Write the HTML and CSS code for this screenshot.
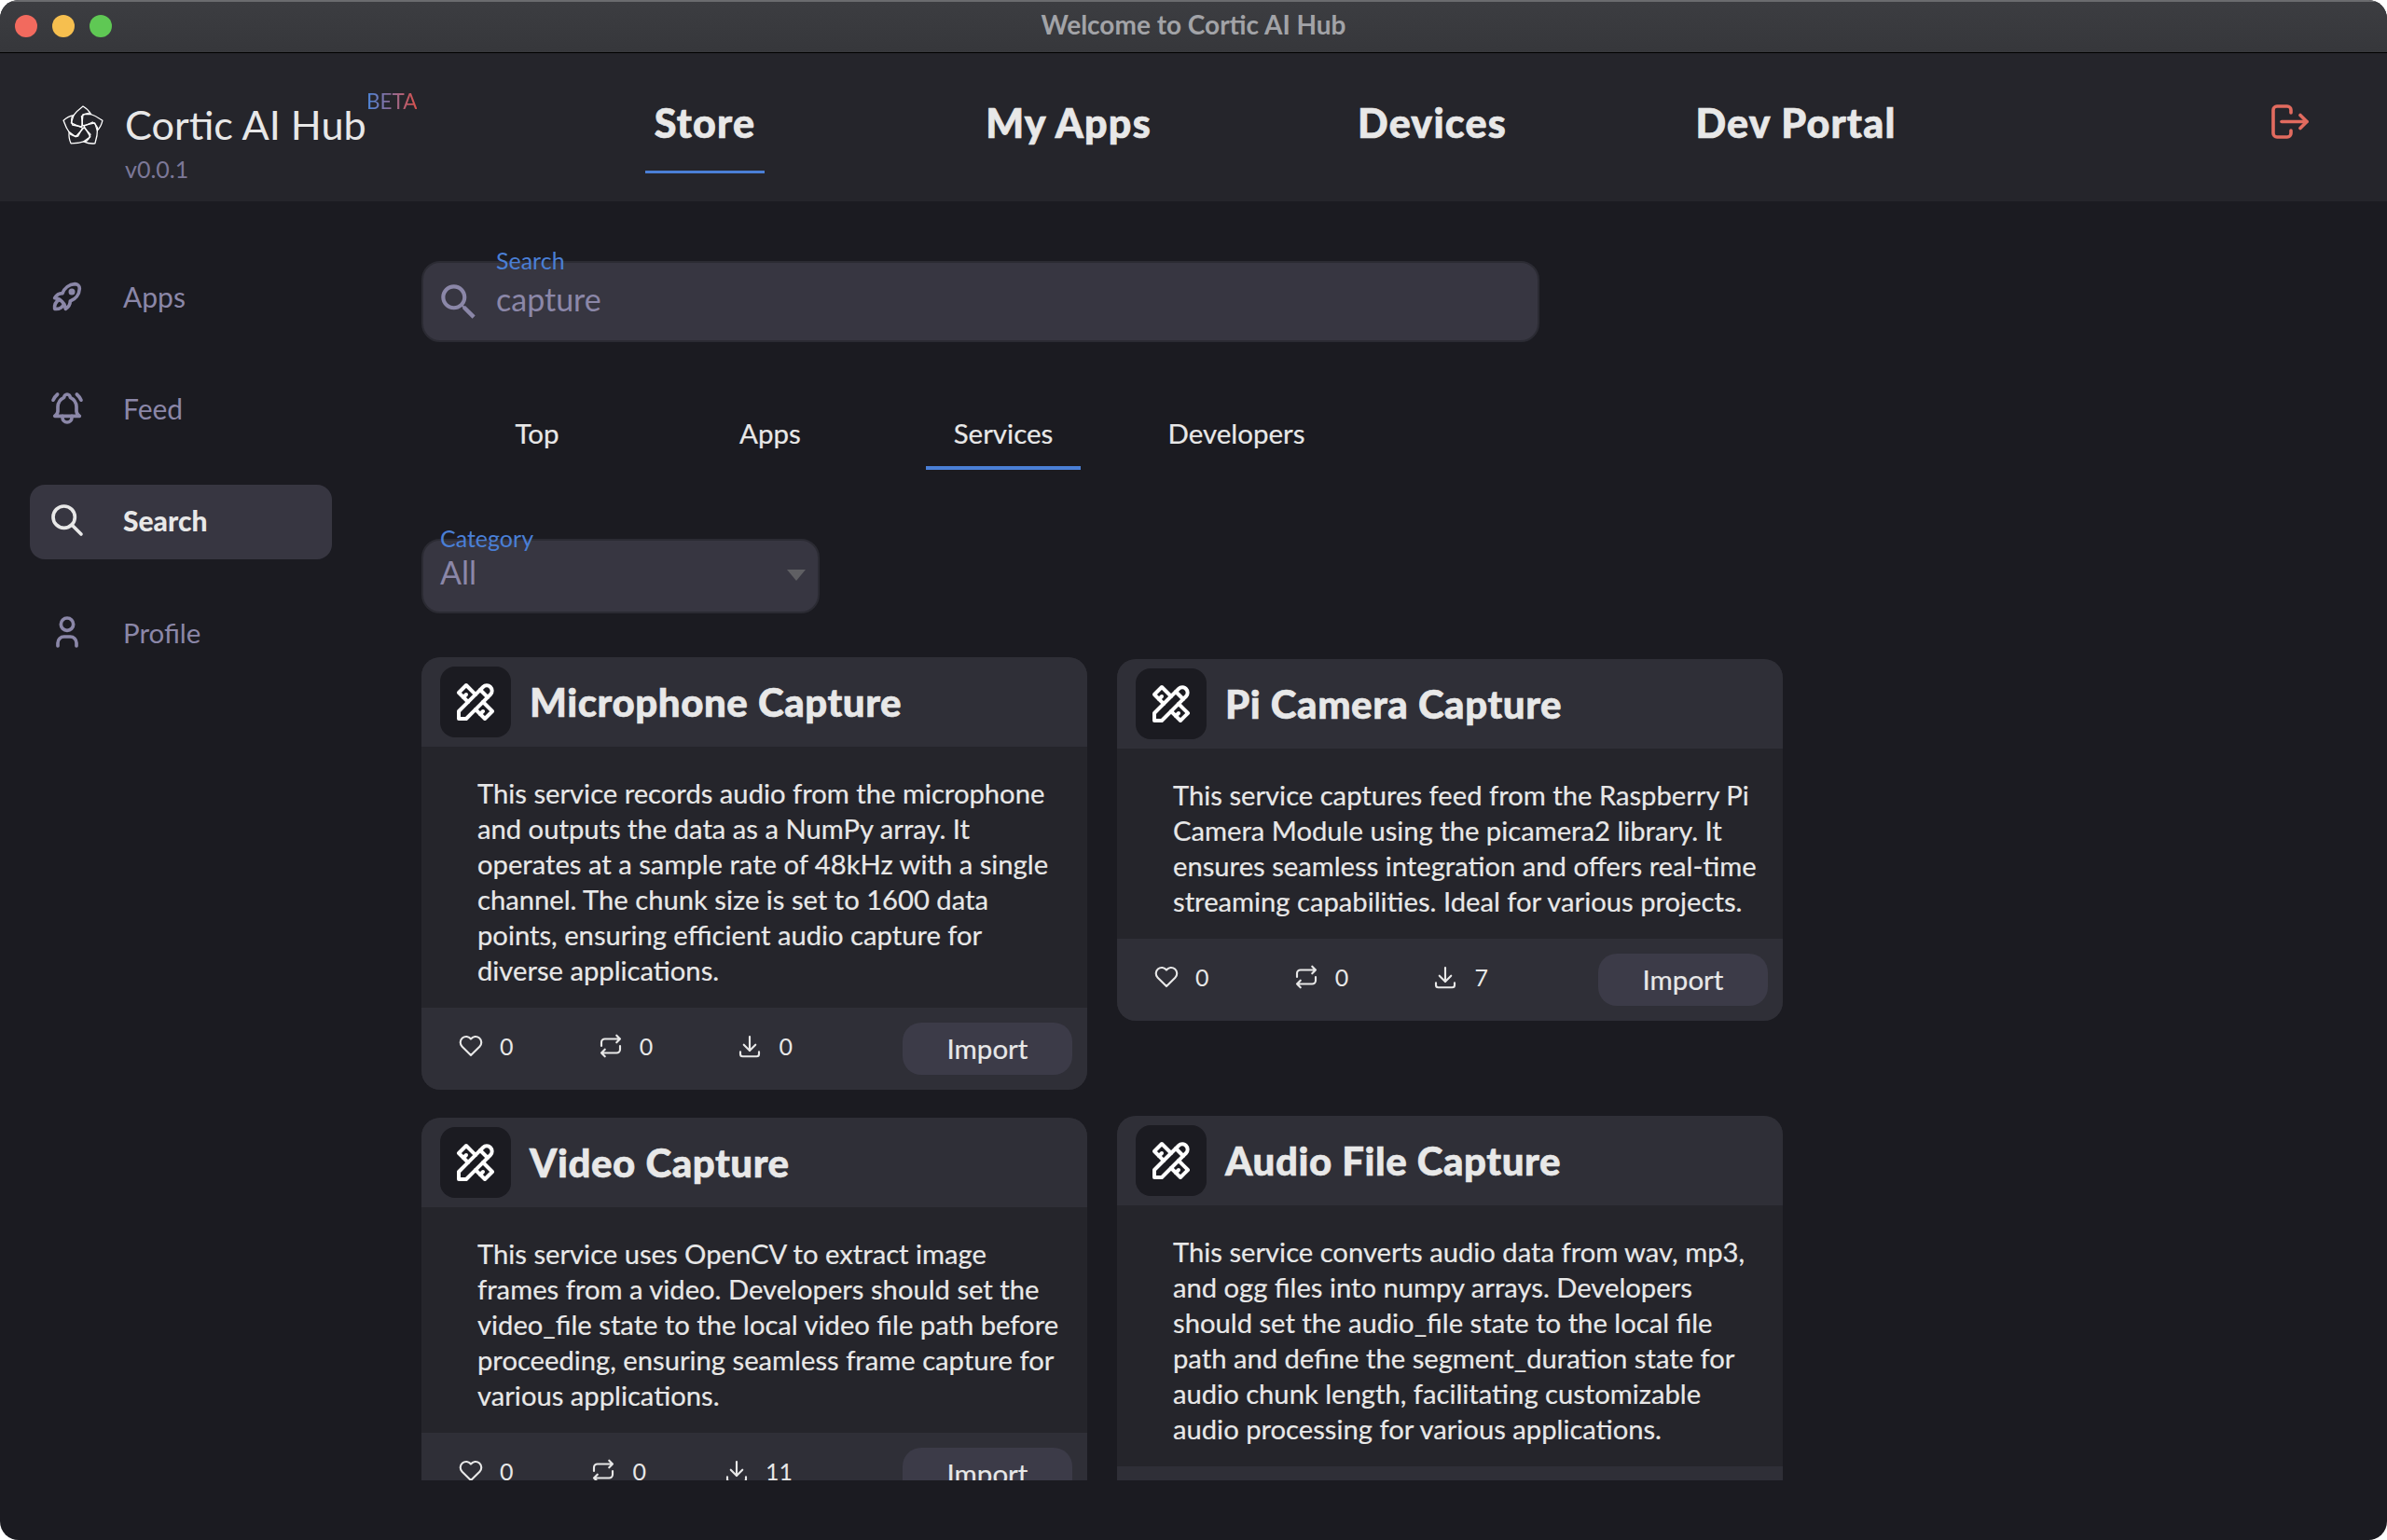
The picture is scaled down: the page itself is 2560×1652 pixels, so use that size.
FILE: index.html
```html
<!DOCTYPE html>
<html lang="en">
<head>
<meta charset="utf-8">
<title>Welcome to Cortic AI Hub</title>
<link rel="stylesheet" href="styles.css">
</head>
<body>
<svg class="defs" width="0" height="0" aria-hidden="true">
  <defs>
    <symbol id="i-tools" viewBox="0 0 24 24"><path d="M3 21h4l13 -13a1.5 1.5 0 0 0 -4 -4l-13 13v4"/><path d="M14.5 5.5l4 4"/><path d="M12 8l-5 -5l-4 4l5 5"/><path d="M7 8l-1.5 1.5"/><path d="M16 12l5 5l-4 4l-5 -5"/><path d="M16 17l-1.5 1.5"/></symbol>
    <symbol id="i-heart" viewBox="0 0 24 24"><path d="M19.5 12.572l-7.5 7.428l-7.5 -7.428a5 5 0 1 1 7.5 -6.566a5 5 0 1 1 7.5 6.572"/></symbol>
    <symbol id="i-repeat" viewBox="0 0 24 24"><path d="M4 12v-3a3 3 0 0 1 3 -3h13m-3 -3l3 3l-3 3"/><path d="M20 12v3a3 3 0 0 1 -3 3h-13m3 3l-3 -3l3 -3"/></symbol>
    <symbol id="i-download" viewBox="0 0 24 24"><path d="M4 17v2a2 2 0 0 0 2 2h12a2 2 0 0 0 2 -2v-2"/><path d="M7 11l5 5l5 -5"/><path d="M12 4l0 12"/></symbol>
  </defs>
</svg>
<div class="window">
  <div class="titlebar">
    <div class="lights"><span class="light red"></span><span class="light yellow"></span><span class="light green"></span></div>
    <div class="wintitle">Welcome to Cortic AI Hub</div>
  </div>
  <header class="header">
    <div class="brand">
      <svg class="logo" viewBox="0 0 48 48"><path id="petal" d="M22.7 25L12.7 23Q10.8 19 12 15Q17 8 24 3Q29.5 6 32.7 11.7L24 11.7Z"/><use href="#petal" transform="rotate(72 24 25)"/><use href="#petal" transform="rotate(144 24 25)"/><use href="#petal" transform="rotate(216 24 25)"/><use href="#petal" transform="rotate(288 24 25)"/></svg>
      <div class="brandtext">
        <div class="brandname">Cortic AI Hub<span class="beta">BETA</span></div>
        <div class="version">v0.0.1</div>
      </div>
    </div>
    <nav class="nav">
      <div class="navitem"><span class="navlabel active">Store</span></div>
      <div class="navitem"><span class="navlabel">My Apps</span></div>
      <div class="navitem"><span class="navlabel">Devices</span></div>
      <div class="navitem"><span class="navlabel">Dev Portal</span></div>
    </nav>
    <svg class="logout" viewBox="0 0 40 37"><path d="M21 9V6a4 4 0 0 0 -4 -4H6a4 4 0 0 0 -4 4v25a4 4 0 0 0 4 4h11a4 4 0 0 0 4 -4v-3"/><path d="M11 18.500h27"/><path d="M31 11.500l7 7l-7 7"/></svg>
  </header>
  <div class="main">
    <aside class="sidebar">
      <div class="sideitem">
        <svg class="sideicon" viewBox="0 0 24 24"><path d="M4 13a8 8 0 0 1 7 7a6 6 0 0 0 3 -5a9 9 0 0 0 6 -8a3 3 0 0 0 -3 -3a9 9 0 0 0 -8 6a6 6 0 0 0 -5 3"/><path d="M7 14a6 6 0 0 0 -3 6a6 6 0 0 0 6 -3"/><circle cx="15" cy="9" r="1"/></svg>
        <span>Apps</span>
      </div>
      <div class="sideitem">
        <svg class="sideicon" viewBox="0 0 24 24"><path d="M10 5a2 2 0 0 1 4 0a7 7 0 0 1 4 6v3a4 4 0 0 0 2 3h-16a4 4 0 0 0 2 -3v-3a7 7 0 0 1 4 -6"/><path d="M9 17v1a3 3 0 0 0 6 0v-1"/><path d="M21 6.727a11.05 11.05 0 0 0 -2.794 -3.727"/><path d="M3 6.727a11.05 11.05 0 0 1 2.792 -3.727"/></svg>
        <span>Feed</span>
      </div>
      <div class="sideitem current">
        <svg class="sideicon" viewBox="0 0 24 24"><circle cx="10" cy="10" r="7"/><path d="M21 21l-6 -6"/></svg>
        <span>Search</span>
      </div>
      <div class="sideitem">
        <svg class="sideicon" viewBox="0 0 24 24"><circle cx="12" cy="7" r="4"/><path d="M6 21v-2a4 4 0 0 1 4 -4h4a4 4 0 0 1 4 4v2"/></svg>
        <span>Profile</span>
      </div>
    </aside>
    <main class="content">
      <div class="searchfield">
        <span class="fieldlabel searchlabel">Search</span>
        <svg class="searchicon" viewBox="0 0 24 24"><path d="M15.5 14h-.79l-.28-.27C15.41 12.59 16 11.11 16 9.5 16 5.91 13.09 3 9.5 3S3 5.91 3 9.5 5.91 16 9.5 16c1.61 0 3.09-.59 4.23-1.57l.27.28v.79l5 4.99L20.49 19l-4.99-5zm-6 0C7.01 14 5 11.99 5 9.5S7.01 5 9.5 5 14 7.01 14 9.5 11.99 14 9.5 14z"/></svg>
        <span class="fieldvalue">capture</span>
      </div>
      <div class="tabs">
        <div class="tab">Top</div>
        <div class="tab">Apps</div>
        <div class="tab selected">Services</div>
        <div class="tab">Developers</div>
      </div>
      <div class="selectfield">
        <span class="fieldlabel catlabel">Category</span>
        <span class="fieldvalue">All</span>
        <span class="caret"></span>
      </div>
      <div class="columns">
        <div class="column left">
          <article class="card">
            <div class="cardhead"><div class="iconbox"><svg class="toolicon"><use href="#i-tools"/></svg></div><h2>Microphone Capture</h2></div>
            <p class="cardbody">This service records audio from the microphone and outputs the data as a NumPy array. It operates at a sample rate of 48kHz with a single channel. The chunk size is set to 1600 data points, ensuring efficient audio capture for diverse applications.</p>
            <div class="cardfoot">
              <div class="stats">
                <div class="stat"><svg class="staticon"><use href="#i-heart"/></svg>0</div>
                <div class="stat"><svg class="staticon"><use href="#i-repeat"/></svg>0</div>
                <div class="stat"><svg class="staticon"><use href="#i-download"/></svg>0</div>
              </div>
              <div class="import">Import</div>
            </div>
          </article>
          <article class="card">
            <div class="cardhead"><div class="iconbox"><svg class="toolicon"><use href="#i-tools"/></svg></div><h2>Video Capture</h2></div>
            <p class="cardbody">This service uses OpenCV to extract image frames from a video. Developers should set the video_file state to the local video file path before proceeding, ensuring seamless frame capture for various applications.</p>
            <div class="cardfoot">
              <div class="stats">
                <div class="stat"><svg class="staticon"><use href="#i-heart"/></svg>0</div>
                <div class="stat"><svg class="staticon"><use href="#i-repeat"/></svg>0</div>
                <div class="stat"><svg class="staticon"><use href="#i-download"/></svg>11</div>
              </div>
              <div class="import">Import</div>
            </div>
          </article>
        </div>
        <div class="column right">
          <article class="card">
            <div class="cardhead"><div class="iconbox"><svg class="toolicon"><use href="#i-tools"/></svg></div><h2>Pi Camera Capture</h2></div>
            <p class="cardbody">This service captures feed from the Raspberry Pi Camera Module using the picamera2 library. It ensures seamless integration and offers real-time streaming capabilities. Ideal for various projects.</p>
            <div class="cardfoot">
              <div class="stats">
                <div class="stat"><svg class="staticon"><use href="#i-heart"/></svg>0</div>
                <div class="stat"><svg class="staticon"><use href="#i-repeat"/></svg>0</div>
                <div class="stat"><svg class="staticon"><use href="#i-download"/></svg>7</div>
              </div>
              <div class="import">Import</div>
            </div>
          </article>
          <article class="card">
            <div class="cardhead"><div class="iconbox"><svg class="toolicon"><use href="#i-tools"/></svg></div><h2>Audio File Capture</h2></div>
            <p class="cardbody">This service converts audio data from wav, mp3, and ogg files into numpy arrays. Developers should set the audio_file state to the local file path and define the segment_duration state for audio chunk length, facilitating customizable audio processing for various applications.</p>
            <div class="cardfoot">
              <div class="stats">
                <div class="stat"><svg class="staticon"><use href="#i-heart"/></svg>0</div>
                <div class="stat"><svg class="staticon"><use href="#i-repeat"/></svg>0</div>
                <div class="stat"><svg class="staticon"><use href="#i-download"/></svg>0</div>
              </div>
              <div class="import">Import</div>
            </div>
          </article>
        </div>
      </div>
    </main>
  </div>
</div>
</body>
</html>
```
FILE: styles.css
```css
* { box-sizing: border-box; }
html, body { margin: 0; padding: 0; height: 100%; background: #fff; }
body { font-family: Lato, "Noto Sans", sans-serif; color: #e8e8e8; }
.defs { position: absolute; }
svg { display: block; fill: none; stroke: currentColor; stroke-linecap: round; stroke-linejoin: round; }

.window { width: 2560px; height: 1652px; background: #1b1b21; border-radius: 20px; overflow: hidden; display: flex; flex-direction: column; }

.titlebar { height: 57px; flex: none; display: flex; align-items: center; justify-content: center; background: linear-gradient(#3c3d41, #36373b); border-top: 2px solid #6a6b6e; border-bottom: 1px solid #000; position: relative; }
.lights { position: absolute; left: 16px; top: 14px; display: flex; gap: 16px; }
.light { width: 24px; height: 24px; border-radius: 50%; }
.red { background: #f26a5e; }
.yellow { background: #f6bf4f; }
.green { background: #5fc854; }
.wintitle { font-size: 28px; font-weight: 700; color: #a2a3a7; margin-top: -6px; }

.header { height: 159px; flex: none; background: #25252b; display: flex; align-items: flex-start; position: relative; }
.brand { width: 561px; flex: none; display: flex; padding: 47px 0 0 65px; }
.logo { width: 48px; height: 48px; stroke: #fff; stroke-width: 1.3; margin-top: 7px; }
.brandtext { margin-left: 21px; }
.brandname { font-size: 43.200px; line-height: 58px; color: #e8e8e8; position: relative; white-space: nowrap; }
.beta { position: absolute; left: 259px; top: -8px; font-size: 22.500px; line-height: 26px; background: linear-gradient(90deg, #4a86dc, #d8514c); -webkit-background-clip: text; background-clip: text; color: transparent; }
.version { font-size: 25px; line-height: 30px; color: #7c7898; margin-top: 4px; }

.nav { display: flex; padding-top: 46px; }
.navitem { width: 390px; display: flex; justify-content: center; }
.navlabel { font-size: 43px; font-weight: 900; line-height: 58px; height: 83px; padding: 0 10px; color: #e8e8e8; letter-spacing: 1.2px; -webkit-text-stroke: 0.7px #e8e8e8; }
.navlabel.active { border-bottom: 3px solid #4a7fd6; }
.logout { position: absolute; left: 2436px; top: 55px; width: 40px; height: 37px; stroke: #e26b5f; stroke-width: 3.6; }

.main { flex: 1; display: flex; min-height: 0; }
.sidebar { width: 324px; margin-left: 32px; flex: none; padding-top: 64px; display: flex; flex-direction: column; gap: 40px; }
.sideitem { height: 80px; border-radius: 16px; display: flex; align-items: center; padding: 0 0 4px 20px; gap: 40px; font-size: 30px; color: #8b87a8; }
.sideitem:last-child { font-size: 29.500px; }
.sideitem.current { background: #373641; color: #e8e8e8; font-weight: 900; }
.sideicon { width: 40px; height: 40px; stroke-width: 2.2; }

.content { margin-left: 96px; width: 1460px; height: 1372px; overflow: hidden; padding-top: 64px; }

.searchfield { width: 1199px; height: 87px; background: #373641; border: 2px solid #2b2b33; border-radius: 20px; position: relative; display: flex; align-items: center; padding: 0 0 6px 13px; }
.fieldlabel { position: absolute; color: #4a7fd6; font-size: 25px; line-height: 30px; }
.searchlabel { left: 78px; top: -18px; }
.searchicon { width: 50px; height: 50px; fill: #8b87a8; stroke: none; flex: none; margin-right: 15px; margin-top: 6px; }
.fieldvalue { font-size: 34px; color: #8b87a8; line-height: 44px; }

.tabs { display: flex; gap: 84px; margin: 57px 0 0 41px; }
.tab { width: 166px; height: 80px; display: flex; align-items: center; justify-content: center; font-size: 29.500px; color: #e8e8e8; border-bottom: 4px solid transparent; padding-top: 4px; -webkit-text-stroke: 0.2px #e8e8e8; }
.tab.selected { border-bottom-color: #4a7fd6; }

.selectfield { width: 427px; height: 80px; margin-top: 74px; background: #373641; border: 2px solid #2b2b33; border-radius: 20px; position: relative; display: flex; align-items: flex-start; padding: 12px 0 0 18px; }
.catlabel { left: 18px; top: -18px; }
.caret { position: absolute; right: 13px; top: 31px; width: 0; height: 0; border-left: 10px solid transparent; border-right: 10px solid transparent; border-top: 12px solid #5f5f63; }

.columns { display: flex; gap: 32px; margin-top: 47px; align-items: flex-start; }
.column { width: 714px; display: flex; flex-direction: column; }
.column.left { gap: 30px; }
.column.right { gap: 102px; padding-top: 2px; }

.card { background: #25252b; border-radius: 20px; overflow: hidden; }
.cardhead { height: 96px; background: #2f2f37; display: flex; align-items: center; padding-left: 20px; gap: 20px; }
.cardhead h2 { margin: 0; font-size: 42px; font-weight: 900; color: #e8e8e8; letter-spacing: 0.55px; -webkit-text-stroke: 0.6px #e8e8e8; }
.iconbox { width: 76px; height: 76px; border-radius: 16px; background: #1b1b21; display: flex; align-items: center; justify-content: center; }
.toolicon { width: 48px; height: 48px; stroke-width: 2; color: #fff; }
.cardbody { margin: 0; padding: 31px 20px 21px 60px; font-size: 29.200px; line-height: 38px; color: #e8e8e8; -webkit-text-stroke: 0.2px #e8e8e8; }
.cardfoot { height: 88px; background: #2f2f37; display: flex; align-items: center; padding: 0 16px 0 38px; justify-content: space-between; }
.stats { width: 360px; display: flex; justify-content: space-between; padding-bottom: 6px; }
.stat { display: flex; align-items: center; gap: 16px; font-size: 25px; color: #e8e8e8; }
.staticon { width: 30px; height: 30px; stroke-width: 1.7; }
.import { width: 182px; height: 56px; border-radius: 20px; background: #3c3b48; display: flex; align-items: center; justify-content: center; font-size: 29.500px; color: #e8e8e8; padding-bottom: 2px; -webkit-text-stroke: 0.2px #e8e8e8; }
```
